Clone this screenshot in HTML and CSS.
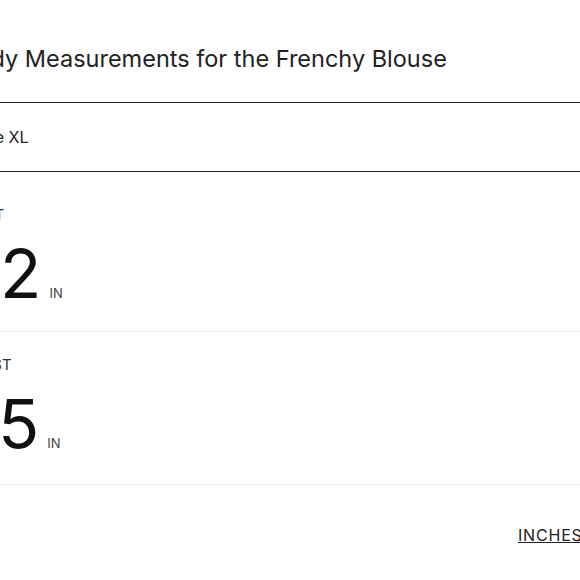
FILE: index.html
```html
<!DOCTYPE html>
<html lang="en">
<head>
    <meta charset="UTF-8">
    <meta name="viewport" content="width=device-width, initial-scale=1.0">
    <title>Body Measurements</title>
    <link rel="stylesheet" href="styles.css">
</head>
<body>
    <div class="sheet">
        <h2 class="sheet-title">Body Measurements for the Frenchy Blouse</h2>
        <div class="size-row">Size XL</div>
        <ul class="measures">
            <li class="measure">
                <div class="measure-label">BUST</div>
                <div class="measure-value">42<span class="unit">IN</span></div>
            </li>
            <li class="measure">
                <div class="measure-label">WAIST</div>
                <div class="measure-value">35<span class="unit">IN</span></div>
            </li>
        </ul>
        <div class="units">
            <a href="#" class="unit-link active">INCHES</a>
            <a href="#" class="unit-link">CM</a>
        </div>
    </div>
</body>
</html>
```

FILE: styles.css
```css
html, body {
    margin: 0;
    background: #fff;
    overflow: hidden;
}
body {
    font-family: Inter, "Noto Sans", sans-serif;
    color: #222;
}
.sheet {
    width: 680px;
    margin-left: -44px;
}
.sheet-title {
    margin: 0;
    padding: 44px 0 28px 5px;
    font-size: 23.5px;
    font-weight: 400;
    line-height: 30px;
    border-bottom: 1.5px solid #222;
}
.size-row {
    height: 68px;
    padding-left: 16px;
    line-height: 68px;
    font-size: 16px;
    border-bottom: 1.5px solid #222;
}
.measures {
    list-style: none;
    margin: 0;
    padding: 0;
}
.measure {
    padding: 23px 0 21px;
    border-bottom: 1px solid #eee;
}
.measure:first-child {
    padding-top: 33px;
    padding-bottom: 18px;
}
.measure-label {
    padding-left: 8px;
    font-size: 15px;
    line-height: 20px;
    color: #333;
}
.measure-value {
    margin-top: 8px;
    font-size: 68px;
    line-height: 80px;
    color: #111;
}
.unit {
    margin-left: 8px;
    font-size: 13px;
    line-height: 1;
    color: #444;
}
.units {
    display: flex;
    gap: 16px;
    padding: 40px 0 0 562px;
    font-size: 16px;
    letter-spacing: 0.8px;
    line-height: 20px;
}
.unit-link {
    color: #222;
    text-decoration: none;
}
.unit-link.active {
    text-decoration: underline;
}
```
